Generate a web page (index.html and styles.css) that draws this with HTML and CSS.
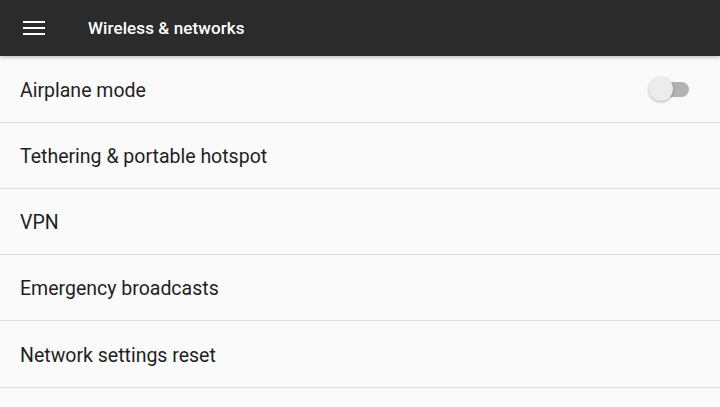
FILE: index.html
```html
<!DOCTYPE html>
<html>
<head>
<meta charset="utf-8">
<link rel="stylesheet" href="styles.css">
</head>
<body>
<header class="appbar">
  <svg class="menu" width="22" height="16" viewBox="0 0 22 16">
    <rect x="0" y="1" width="22" height="2" fill="#fff"/>
    <rect x="0" y="7" width="22" height="2" fill="#fff"/>
    <rect x="0" y="13" width="22" height="2" fill="#fff"/>
  </svg>
  <h1 class="title">Wireless &amp; networks</h1>
</header>
<ul class="list">
  <li class="row"><span>Airplane mode</span><span class="switch"><span class="track"></span><span class="thumb"></span></span></li>
  <li class="row"><span>Tethering &amp; portable hotspot</span></li>
  <li class="row"><span>VPN</span></li>
  <li class="row"><span>Emergency broadcasts</span></li>
  <li class="row"><span>Network settings reset</span></li>
</ul>
</body>
</html>
```
FILE: styles.css
```css
* { box-sizing: border-box; }
html, body { margin: 0; padding: 0; }
body {
  width: 720px;
  height: 407px;
  overflow: hidden;
  background: #fafafa;
  font-family: Roboto, "Noto Sans", sans-serif;
}
.appbar {
  height: 56px;
  background: #2b2b2b;
  display: flex;
  align-items: center;
  padding-left: 23px;
  position: relative;
  z-index: 2;
  box-shadow: 0 1px 4px rgba(0,0,0,0.28);
}
.menu { display: block; margin-top: -1px; }
.title {
  margin: 0 0 0 43px;
  color: #fff;
  font-size: 17px;
  font-weight: 500;
  letter-spacing: 0.1px;
}
.list { list-style: none; margin: 0; padding: 0; }
.row {
  height: 66px;
  border-bottom: 1px solid #dedede;
  display: flex;
  align-items: center;
  justify-content: space-between;
  padding: 2px 31px 0 20px;
  font-size: 19.5px;
  color: #1f1f1f;
}
.row:first-child { height: 67px; }
.row:last-child { height: 67px; }
.switch {
  position: relative;
  width: 40px;
  height: 26px;
  display: block;
}
.track {
  position: absolute;
  left: 6px;
  top: 5px;
  width: 34px;
  height: 15px;
  border-radius: 8px;
  background: #b2b2b2;
}
.thumb {
  position: absolute;
  left: 0;
  top: 0;
  width: 24px;
  height: 24px;
  border-radius: 50%;
  background: #ececec;
  box-shadow: 0 1px 3px rgba(0,0,0,0.3);
}
```
